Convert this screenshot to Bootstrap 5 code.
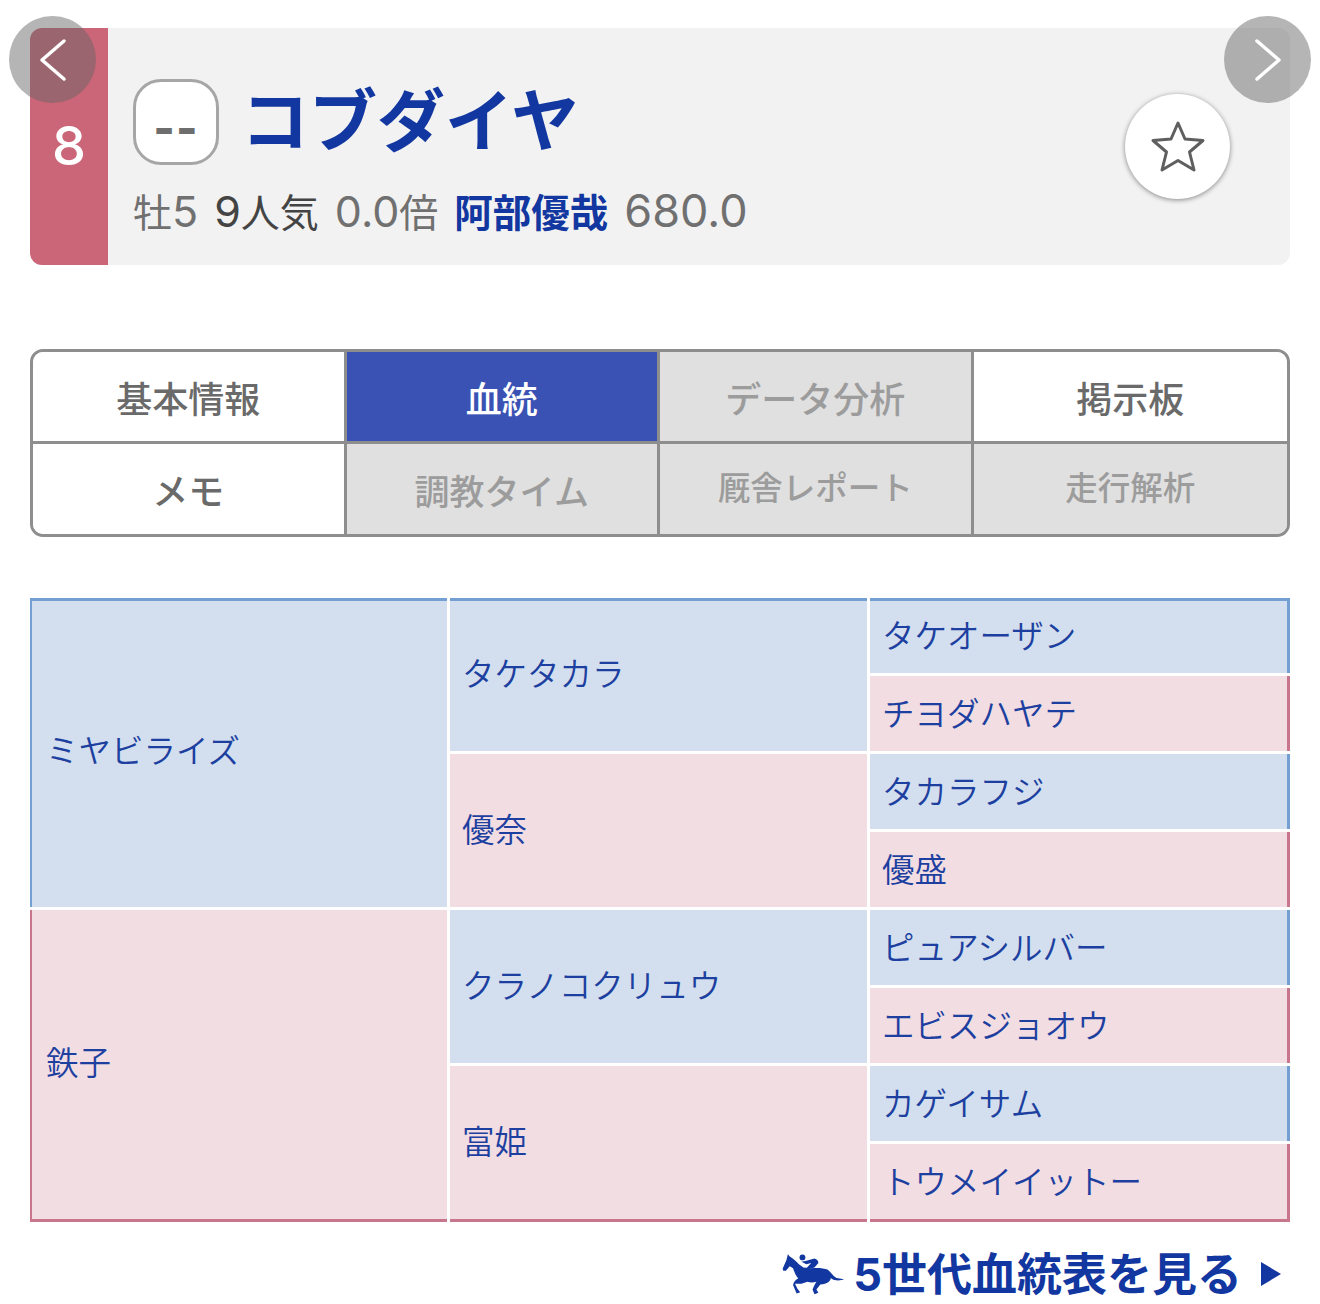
<!DOCTYPE html>
<html lang="ja">
<head>
  <meta charset="UTF-8">
  <title>コブダイヤ 血統</title>
  <link href="https://cdn.jsdelivr.net/npm/bootstrap@5.3.3/dist/css/bootstrap.min.css" rel="stylesheet">
  <style>
    body { font-family: "Liberation Sans", "Noto Sans CJK JP", sans-serif; background: #fff; overflow: hidden; }
    .page-wrap { padding: 28px 30px 0; }
    .num-font { font-family: Inter, "Liberation Sans", sans-serif; }

    .horse-head { height: 237px; background: #f2f2f2; border-radius: 12px; }
    .waku-band { width: 78px; background: #cb6678; color: #fff; font-size: 54px; font-weight: 500; padding-top: 88px; border-radius: 12px 0 0 12px; line-height: 60px; }
    .head-body { padding: 51px 0 0 25px; }
    .mark-box { width: 86px; height: 86px; background: #fff; border: 3px solid #a6a6a6; border-radius: 28px; color: #6e6e6e; font-size: 46px; font-weight: 800; line-height: 1; padding-top: 11px; letter-spacing: 1px; }
    .horse-name { font-size: 68px; font-weight: 700; color: #1237a0; line-height: 86px; margin-left: 22px; }
    .horse-sub { font-size: 39px; line-height: 58px; color: #707070; margin-top: 17px; white-space: nowrap; }
    .horse-sub > span { margin-right: 16px; }
    .horse-sub .num-font { font-size: 43px; }
    .horse-sub .sub-dark { color: #444; }
    .horse-sub .sub-jockey { color: #1237a0; font-weight: 700; font-size: 38.5px; }
    .horse-sub .sub-weight { font-size: 45px; }

    .slide-btn { width: 87px; height: 87px; top: -12px; background: rgba(100, 100, 100, .48); }
    .slide-prev { left: -21px; }
    .slide-next { right: -21px; }
    .fav-btn { width: 105px; height: 105px; top: 66px; right: 60px; background: #fff; box-shadow: 0 1px 5px rgba(0, 0, 0, .45); }

    .tab-box { margin-top: 84px; border: 3px solid #8e8e8e; border-radius: 13px; overflow: hidden; }
    .tab-cell { height: 90px; font-size: 36px; font-weight: 500; color: #6a6a6a; background: #fff; text-decoration: none; border-right: 3px solid #8e8e8e; padding-top: 8px; }
    .tab-box .col-3:nth-child(4n) .tab-cell { border-right: 0; }
    .tab-box .col-3:nth-child(-n+4) .tab-cell { height: 92px; padding-top: 8px; border-bottom: 3px solid #8e8e8e; }
    .tab-box .tab-active { background: #3a52b4; color: #fff; }
    .tab-box .tab-off { background: #e0e0e0; color: #9c9c9c; }
    .tab-box .tab-mid { font-size: 35px; }
    .tab-box .tab-small { font-size: 32.5px; padding-top: 0; }

    .ped-grid { margin-top: 61px; height: 624px; display: grid; gap: 3px; grid-template-columns: 417px 417px 1fr; grid-template-rows: repeat(7, 75px) 1fr; }
    .ped-cell { color: #1d3fa0; font-size: 32.5px; font-weight: 350; padding: 0 12px; line-height: 1.2; }
    .ped-male { background: #d3dfee; border: 0 solid #739fd3; }
    .ped-female { background: #f1dde2; border: 0 solid #c8768e; }
    .ped-g1 { grid-row: span 4; border-left-width: 2px; padding: 0 14px; }
    .ped-g1.ped-top { padding: 0 14px 3px; }
    .ped-g2 { grid-row: span 2; padding-top: 2px; }
    .ped-g2.ped-top { padding-top: 0; padding-bottom: 2px; }
    .ped-g3 { border-right-width: 3px; padding-top: 3px; }
    .ped-g3.ped-top { padding-top: 0; }
    .ped-top { border-top-width: 3px; }
    .ped-end { border-bottom-width: 3px; }

    .more-link { color: #1237a0; font-size: 45px; font-weight: 700; text-decoration: none; margin-top: 27px; line-height: 52px; }
    .more-link svg { flex: none; }
    .more-arrow { margin: 0 9px 3px 19px; }
    .more-horse { margin: 0 8px 4px 0; }
  </style>
</head>
<body>
<div class="page-wrap">

  <div class="position-relative">
    <div class="horse-head d-flex">
      <div class="waku-band num-font text-center flex-shrink-0">8</div>
      <div class="head-body">
        <div class="d-flex align-items-center">
          <div class="mark-box num-font d-flex align-items-center justify-content-center">--</div>
          <div class="horse-name">コブダイヤ</div>
        </div>
        <div class="horse-sub">
          <span>牡<span class="num-font">5</span></span><span class="sub-dark"><span class="num-font">9</span>人気</span><span><span class="num-font">0.0</span>倍</span><span class="sub-jockey">阿部優哉</span><span class="num-font sub-weight">680.0</span>
        </div>
      </div>
    </div>

    <div class="slide-btn slide-prev position-absolute rounded-circle d-flex align-items-center justify-content-center">
      <svg width="30" height="44" viewBox="0 0 30 44"><path d="M26 3 L4 22 L26 41" fill="none" stroke="#fff" stroke-width="3.500" stroke-linecap="round" stroke-linejoin="round"/></svg>
    </div>
    <div class="slide-btn slide-next position-absolute rounded-circle d-flex align-items-center justify-content-center">
      <svg width="30" height="44" viewBox="0 0 30 44"><path d="M4 3 L26 22 L4 41" fill="none" stroke="#fff" stroke-width="3.500" stroke-linecap="round" stroke-linejoin="round"/></svg>
    </div>
    <div class="fav-btn position-absolute rounded-circle d-flex align-items-center justify-content-center">
      <svg width="56" height="52" viewBox="0 0 56 52"><path d="M28 2 L35 18 L53 19.500 L39.500 31 L44 49 L28 39.500 L12 49 L16.500 31 L3 19.500 L21 18 Z" fill="none" stroke="#5f5f5f" stroke-width="3" stroke-linejoin="round"/></svg>
    </div>
  </div>

  <div class="tab-box row g-0">
    <div class="col-3"><a href="#" class="tab-cell d-flex align-items-center justify-content-center">基本情報</a></div>
    <div class="col-3"><a href="#" class="tab-cell tab-active d-flex align-items-center justify-content-center">血統</a></div>
    <div class="col-3"><a href="#" class="tab-cell tab-off d-flex align-items-center justify-content-center">データ分析</a></div>
    <div class="col-3"><a href="#" class="tab-cell d-flex align-items-center justify-content-center">掲示板</a></div>
    <div class="col-3"><a href="#" class="tab-cell d-flex align-items-center justify-content-center">メモ</a></div>
    <div class="col-3"><a href="#" class="tab-cell tab-off tab-mid d-flex align-items-center justify-content-center">調教タイム</a></div>
    <div class="col-3"><a href="#" class="tab-cell tab-off tab-small d-flex align-items-center justify-content-center">厩舎レポート</a></div>
    <div class="col-3"><a href="#" class="tab-cell tab-off tab-small d-flex align-items-center justify-content-center">走行解析</a></div>
  </div>

  <div class="ped-grid" id="pedigree"></div>

  <div class="d-flex justify-content-end">
    <a href="#" class="more-link d-flex align-items-center">
      <svg width="63" height="42" viewBox="10 12 194 128" class="more-horse"><path fill="#1237a0" d="M12 60 L24 32 L28 15 L34 22 C45 28 55 38 62 46 L76 56 L100 58 C120 56 140 58 150 62 C160 68 165 82 178 88 L201 92 C190 97 172 98 160 88 C160 98 150 106 128 108 L116 124 L122 134 L110 138 L104 124 C108 114 112 106 116 100 C105 104 95 102 88 100 L70 106 L50 106 L58 122 L66 132 L55 136 L44 110 C46 100 52 94 60 90 C52 80 48 70 44 58 L34 52 L22 66 L14 66 Z"/><circle cx="73" cy="25" r="9" fill="#1237a0"/><path fill="#1237a0" d="M70 38 L85 35 L110 28 C118 30 122 36 122 42 L110 56 L95 60 L85 58 L100 42 L85 46 Z"/></svg>
      <span><span class="num-font">5</span>世代血統表を見る</span>
      <svg width="20" height="24" viewBox="0 0 20 24" class="more-arrow"><path fill="#1237a0" d="M0 0 L20 12 L0 24 Z"/></svg>
    </a>
  </div>
</div>

<script>
  // [col, name, sex, extra classes] in row order for the pedigree grid
  const pedigree = [
    ["g1", "ミヤビライズ", "male", "ped-top"],
    ["g2", "タケタカラ", "male", "ped-top"],
    ["g3", "タケオーザン", "male", "ped-top"],
    ["g3", "チヨダハヤテ", "female", ""],
    ["g2", "優奈", "female", ""],
    ["g3", "タカラフジ", "male", ""],
    ["g3", "優盛", "female", ""],
    ["g1", "鉄子", "female", "ped-end"],
    ["g2", "クラノコクリュウ", "male", ""],
    ["g3", "ピュアシルバー", "male", ""],
    ["g3", "エビスジョオウ", "female", ""],
    ["g2", "富姫", "female", "ped-end"],
    ["g3", "カゲイサム", "male", ""],
    ["g3", "トウメイイットー", "female", "ped-end"]
  ];
  const grid = document.getElementById("pedigree");
  pedigree.forEach(p => {
    const div = document.createElement("div");
    div.className = `ped-cell ped-${p[2]} ped-${p[0]} ${p[3]} d-flex align-items-center`;
    div.textContent = p[1];
    grid.appendChild(div);
  });
</script>
<script src="https://cdn.jsdelivr.net/npm/bootstrap@5.3.3/dist/js/bootstrap.bundle.min.js"></script>
</body>
</html>
